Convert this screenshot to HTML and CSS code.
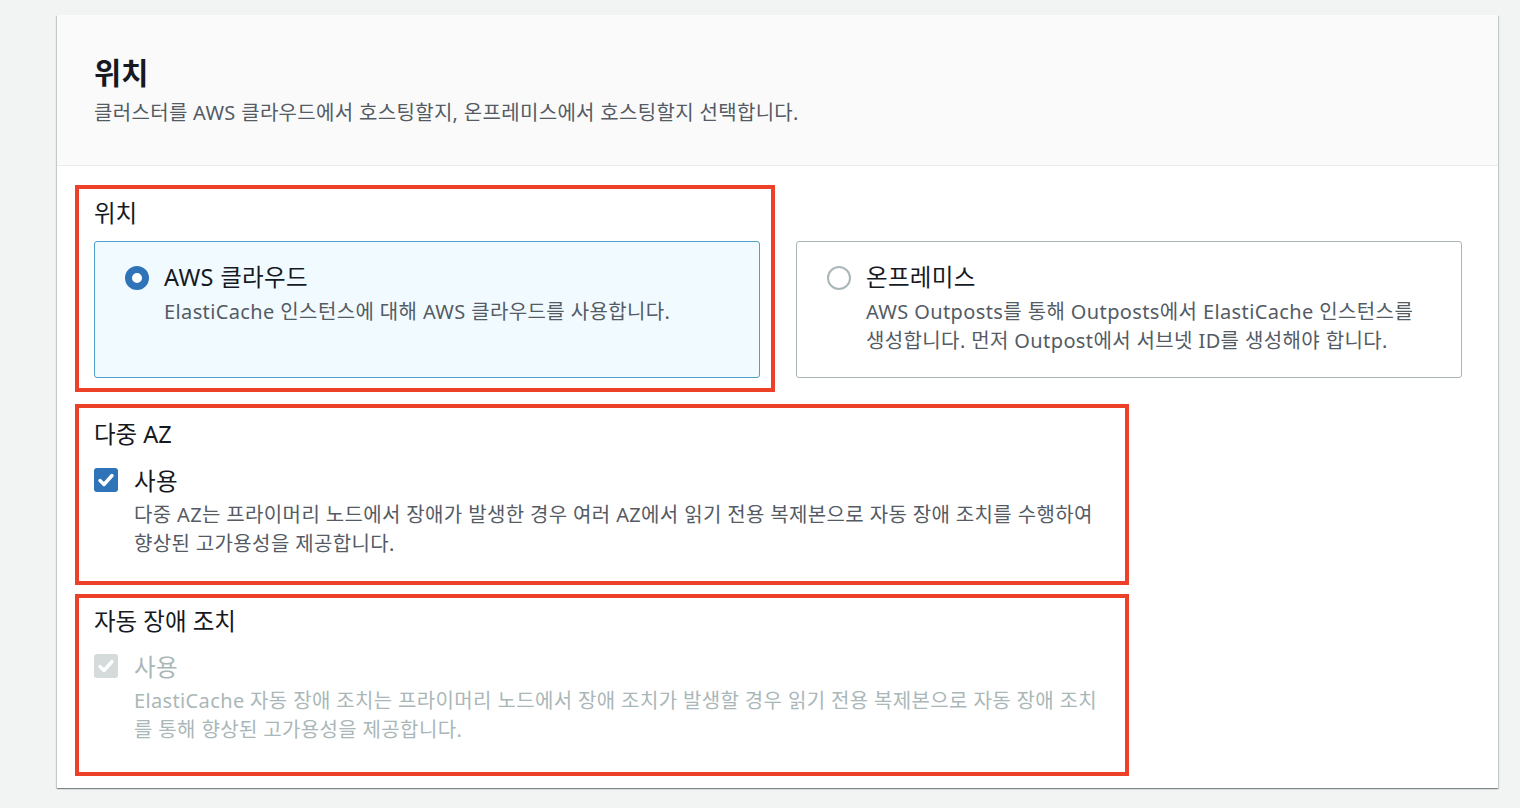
FILE: index.html
```html
<!DOCTYPE html>
<html lang="ko">
<head>
<meta charset="utf-8">
<title>위치</title>
<link rel="stylesheet" href="styles.css">
</head>
<body>
<div class="page">
  <section class="panel">
    <header class="panel-header">
      <h2 class="panel-title">위치</h2>
      <p class="panel-desc">클러스터를 AWS 클라우드에서 호스팅할지, 온프레미스에서 호스팅할지 선택합니다.</p>
    </header>
    <div class="panel-body">
      <div class="location-row">
        <div class="mark mark-location">
          <div class="field-label">위치</div>
          <div class="tile tile-selected">
            <span class="radio radio-on"></span>
            <div class="tile-text">
              <div class="tile-title">AWS 클라우드</div>
              <div class="tile-desc">ElastiCache 인스턴스에 대해 AWS 클라우드를 사용합니다.</div>
            </div>
          </div>
        </div>
        <div class="tile tile-other">
          <span class="radio"></span>
          <div class="tile-text">
            <div class="tile-title">온프레미스</div>
            <div class="tile-desc">AWS Outposts를 통해 Outposts에서 ElastiCache 인스턴스를<br>생성합니다. 먼저 Outpost에서 서브넷 ID를 생성해야 합니다.</div>
          </div>
        </div>
      </div>

      <div class="mark mark-wide mark-az">
        <div class="field-label">다중 AZ</div>
        <div class="check-row">
          <span class="checkbox">
            <svg viewBox="0 0 24 24" width="24" height="24"><path d="M6 12.5l4 4 8-9" fill="none" stroke="#fff" stroke-width="3.4" stroke-linecap="round" stroke-linejoin="round"/></svg>
          </span>
          <div class="check-text">
            <div class="check-title">사용</div>
            <div class="check-desc">다중 AZ는 프라이머리 노드에서 장애가 발생한 경우 여러 AZ에서 읽기 전용 복제본으로 자동 장애 조치를 수행하여<br>향상된 고가용성을 제공합니다.</div>
          </div>
        </div>
      </div>

      <div class="mark mark-wide mark-failover">
        <div class="field-label">자동 장애 조치</div>
        <div class="check-row disabled">
          <span class="checkbox">
            <svg viewBox="0 0 24 24" width="24" height="24"><path d="M6 12.5l4 4 8-9" fill="none" stroke="#fff" stroke-width="3.4" stroke-linecap="round" stroke-linejoin="round"/></svg>
          </span>
          <div class="check-text">
            <div class="check-title">사용</div>
            <div class="check-desc">ElastiCache 자동 장애 조치는 프라이머리 노드에서 장애 조치가 발생할 경우 읽기 전용 복제본으로 자동 장애 조치<br>를 통해 향상된 고가용성을 제공합니다.</div>
          </div>
        </div>
      </div>
    </div>
  </section>
</div>
</body>
</html>
```

FILE: styles.css
```css
* { box-sizing: border-box; }
html, body { margin: 0; padding: 0; }
body {
  background: #f2f3f3;
  font-family: "Noto Sans", "Noto Sans CJK KR", sans-serif;
  color: #16191f;
  width: 1520px;
  height: 808px;
  overflow: hidden;
}
.page {
  padding: 15px 22px 0 57px;
}
.panel {
  background: #fff;
  height: 773px;
  box-shadow: 0 1px 1px 0 rgba(0, 28, 36, 0.3), 1px 1px 1px 0 rgba(0, 28, 36, 0.15), -1px 1px 1px 0 rgba(0, 28, 36, 0.15);
}
.panel-header {
  background: #fafafa;
  height: 151px;
  border-bottom: 1px solid #eaeded;
  padding: 38px 0 0 37px;
}
.panel-title {
  margin: 0;
  font-size: 29.5px;
  line-height: 40px;
  font-weight: 700;
}
.panel-desc {
  margin: 7px 0 0;
  font-size: 20px;
  letter-spacing: 0.32px;
  line-height: 26px;
  color: #545b64;
}
.panel-body {
  padding: 19px 0 0 18px;
}
.mark {
  border: 4px solid #ec4128;
}
.location-row {
  display: flex;
  align-items: flex-end;
}
.mark-location {
  width: 700px;
  padding: 10px 11px 10px 15px;
}
.field-label {
  font-size: 23.5px;
  line-height: 28px;
}
.tile {
  display: flex;
  align-items: flex-start;
  border-radius: 3px;
  height: 137px;
  padding: 20px 20px 0 30px;
}
.tile-selected {
  margin-top: 14px;
  width: 666px;
  background: #f1faff;
  border: 1px solid #4f9fcd;
}
.tile-other {
  width: 666px;
  margin: 0 0 14px 21px;
  background: #fff;
  border: 1px solid #aab7b8;
}
.radio {
  flex: none;
  width: 24px;
  height: 24px;
  border-radius: 50%;
  border: 2px solid #aab7b8;
  background: #fff;
  margin-top: 4px;
  margin-right: 15px;
}
.radio-on {
  border: 7.5px solid #2f73b9;
  background: #fff;
}
.tile-title {
  font-size: 23.5px;
  letter-spacing: 0.3px;
  line-height: 30px;
}
.tile-desc {
  margin-top: 5px;
  font-size: 20px;
  letter-spacing: 0.38px;
  line-height: 29px;
  color: #545b64;
}
.mark-wide {
  width: 1054px;
  padding: 12px 15px 24px 15px;
}
.mark-az {
  margin-top: 12px;
  height: 181px;
}
.mark-failover {
  margin-top: 9px;
  height: 182px;
  padding-top: 9px;
}
.check-row {
  display: flex;
  align-items: flex-start;
  margin-top: 18px;
}
.mark-failover .check-row { margin-top: 17px; }
.checkbox {
  flex: none;
  width: 24px;
  height: 24px;
  border-radius: 3px;
  background: #2f73b9;
  margin-top: 2px;
  margin-right: 16px;
  display: flex;
}
.check-title {
  font-size: 23.5px;
  letter-spacing: 0.3px;
  line-height: 30px;
}
.check-desc {
  margin-top: 4px;
  font-size: 20px;
  letter-spacing: 0.36px;
  line-height: 29px;
  color: #545b64;
}
.disabled .checkbox { background: #d5dbdb; }
.disabled .check-title,
.disabled .check-desc { color: #aab7b8; }
```
